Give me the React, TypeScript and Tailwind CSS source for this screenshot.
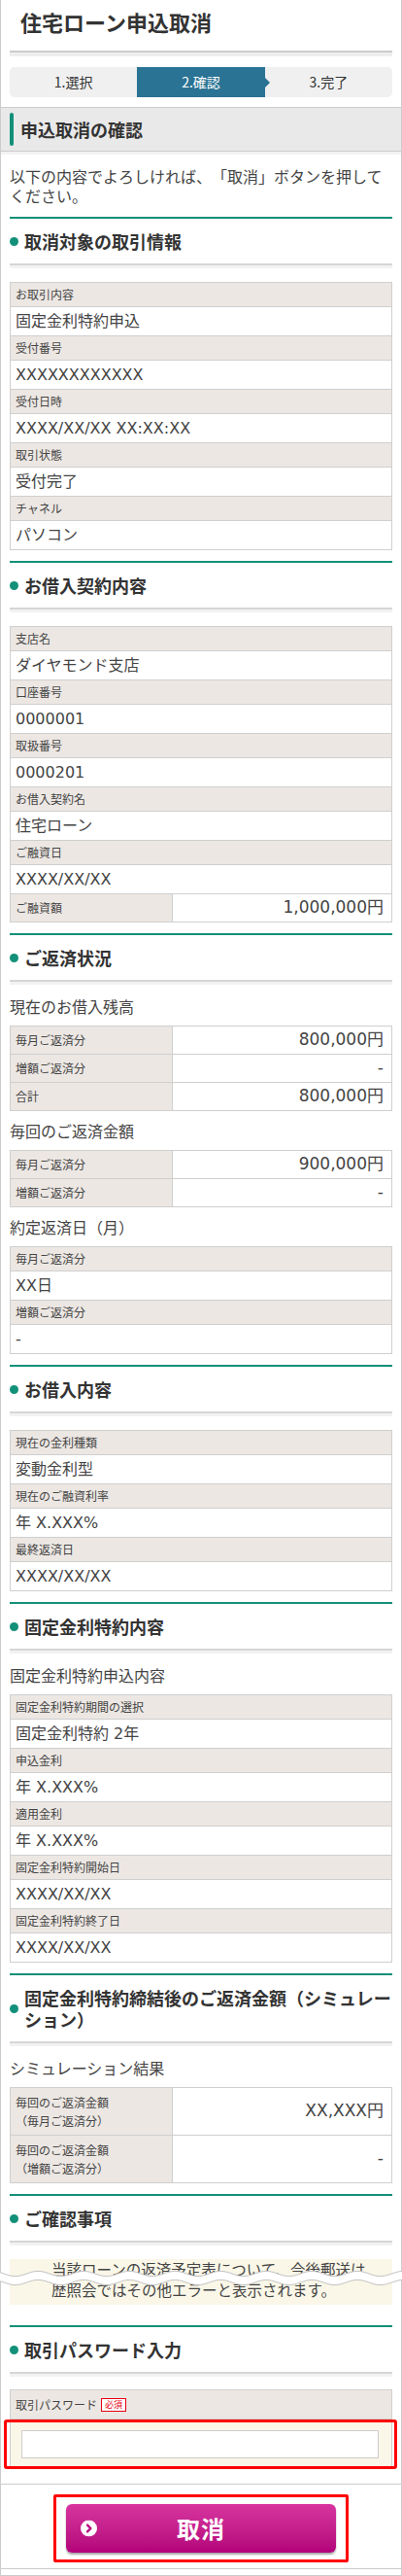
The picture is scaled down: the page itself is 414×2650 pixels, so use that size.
import React from 'react'

// 住宅ローン申込取消 — 確認画面（スマホ幅）

type Row =
  | { kind: 'stack'; label: string; value: string }
  | { kind: 'inline'; label: string; value: string }
  | { kind: 'tall'; label: [string, string]; value: string }

const txInfo: Row[] = [
  { kind: 'stack', label: 'お取引内容', value: '固定金利特約申込' },
  { kind: 'stack', label: '受付番号', value: 'XXXXXXXXXXXX' },
  { kind: 'stack', label: '受付日時', value: 'XXXX/XX/XX XX:XX:XX' },
  { kind: 'stack', label: '取引状態', value: '受付完了' },
  { kind: 'stack', label: 'チャネル', value: 'パソコン' },
]

const contract: Row[] = [
  { kind: 'stack', label: '支店名', value: 'ダイヤモンド支店' },
  { kind: 'stack', label: '口座番号', value: '0000001' },
  { kind: 'stack', label: '取扱番号', value: '0000201' },
  { kind: 'stack', label: 'お借入契約名', value: '住宅ローン' },
  { kind: 'stack', label: 'ご融資日', value: 'XXXX/XX/XX' },
  { kind: 'inline', label: 'ご融資額', value: '1,000,000円' },
]

const balance: Row[] = [
  { kind: 'inline', label: '毎月ご返済分', value: '800,000円' },
  { kind: 'inline', label: '増額ご返済分', value: '-' },
  { kind: 'inline', label: '合計', value: '800,000円' },
]

const perPayment: Row[] = [
  { kind: 'inline', label: '毎月ご返済分', value: '900,000円' },
  { kind: 'inline', label: '増額ご返済分', value: '-' },
]

const payDay: Row[] = [
  { kind: 'stack', label: '毎月ご返済分', value: 'XX日' },
  { kind: 'stack', label: '増額ご返済分', value: '-' },
]

const loan: Row[] = [
  { kind: 'stack', label: '現在の金利種類', value: '変動金利型' },
  { kind: 'stack', label: '現在のご融資利率', value: '年 X.XXX%' },
  { kind: 'stack', label: '最終返済日', value: 'XXXX/XX/XX' },
]

const fixedRate: Row[] = [
  { kind: 'stack', label: '固定金利特約期間の選択', value: '固定金利特約 2年' },
  { kind: 'stack', label: '申込金利', value: '年 X.XXX%' },
  { kind: 'stack', label: '適用金利', value: '年 X.XXX%' },
  { kind: 'stack', label: '固定金利特約開始日', value: 'XXXX/XX/XX' },
  { kind: 'stack', label: '固定金利特約終了日', value: 'XXXX/XX/XX' },
]

const simulation: Row[] = [
  { kind: 'tall', label: ['毎回のご返済金額', '（毎月ご返済分）'], value: 'XX,XXX円' },
  { kind: 'tall', label: ['毎回のご返済金額', '（増額ご返済分）'], value: '-' },
]

// 省略部分の波線（上下2本の平行な波）
function wavePath(offset: number) {
  const pts: string[] = []
  for (let x = -2; x <= 416; x += 2) {
    const y = offset + 2.6 * Math.sin(((x - 4) / 47) * Math.PI * 2)
    pts.push(`${x},${y.toFixed(2)}`)
  }
  return pts
}
const topWave = wavePath(5)
const bottomWave = wavePath(14)
const bandPath = `M${topWave.join(' L')} L${[...bottomWave].reverse().join(' L')} Z`

// 値セル: 英数字は幅の広い DejaVu Sans、和文は Noto Sans CJK JP
const valueFont = "font-['DejaVu_Sans','Noto_Sans_CJK_JP',sans-serif]"

function Table({ rows }: { rows: Row[] }) {
  return (
    <div className="border-x border-b border-[#cfcfcf]">
      {rows.map((r, i) => {
        if (r.kind === 'stack') {
          return (
            <React.Fragment key={i}>
              <div className="h-[25px] border-t border-[#cfcfcf] bg-[#ece7e3] px-[5px] flex items-center text-[12px] text-[#444]">
                {r.label}
              </div>
              <div className={`h-[30px] border-t border-[#cfcfcf] bg-white px-[5px] flex items-center text-[16px] text-[#444] ${valueFont}`}>
                {r.value}
              </div>
            </React.Fragment>
          )
        }
        if (r.kind === 'inline') {
          return (
            <div key={i} className="h-[29px] border-t border-[#cfcfcf] flex">
              <div className="w-[167px] shrink-0 bg-[#ece7e3] border-r border-[#cfcfcf] px-[5px] flex items-center text-[12px] text-[#444]">
                {r.label}
              </div>
              <div className={`flex-1 flex items-center justify-end pr-[8px] text-[17px] text-[#444] ${valueFont}`}>
                {r.value}
              </div>
            </div>
          )
        }
        return (
          <div key={i} className="h-[49px] border-t border-[#cfcfcf] flex">
            <div className="w-[167px] shrink-0 bg-[#ece7e3] border-r border-[#cfcfcf] px-[5px] flex flex-col justify-center text-[12px] leading-[19px] text-[#444]">
              <span>{r.label[0]}</span>
              <span>{r.label[1]}</span>
            </div>
            <div className={`flex-1 flex items-center justify-end pr-[8px] text-[17px] text-[#444] ${valueFont}`}>
              {r.value}
            </div>
          </div>
        )
      })}
    </div>
  )
}

function Section({ title, children }: { title: React.ReactNode; children: React.ReactNode }) {
  return (
    <section className="border-t-2 border-[#13907a]">
      <h2 className="flex items-center gap-[6px] py-[12px]">
        <span className="w-[9px] h-[9px] rounded-full bg-[#13907a] shrink-0" />
        <span className="text-[18px] leading-[22px] font-bold text-[#333]">{title}</span>
      </h2>
      <div className="h-[5px] border-t-2 border-[#d6d6d6] bg-[#f2f2f2]" />
      <div className="pb-[11px]">{children}</div>
    </section>
  )
}

function SubHead({ children, first }: { children: React.ReactNode; first?: boolean }) {
  return (
    <p className={`h-[40px] flex items-center text-[16px] text-[#444] ${first ? 'mt-[2px]' : ''}`}>
      {children}
    </p>
  )
}

export default function App() {
  return (
    <div className="w-[414px] min-h-[2650px] bg-white border-x border-b border-[#cccccc] font-['Noto_Sans_CJK_JP',sans-serif] text-[#333] [text-spacing-trim:space-all]">
      {/* ── タイトル・ステップ ── */}
      <div className="px-[9px]">
        <div className="h-[52px] pt-[10px] pl-[11px]">
          <h1 className="text-[22px] leading-[24px] font-bold text-[#333]">住宅ローン申込取消</h1>
        </div>
        <div className="h-[6px] border-t-2 border-[#cccccc] bg-[#eeeeee]" />

        <ol className="mt-[11px] h-[31px] bg-[#f0f0f0] rounded-[5px] grid grid-cols-3 text-[14px]">
          <li className="flex items-center justify-center text-[#333]">1.選択</li>
          <li className="relative flex items-center justify-center bg-[#2a7394] text-white">
            2.確認
            <span className="absolute right-[-5px] top-1/2 -translate-y-1/2 w-0 h-0 border-y-[5px] border-y-transparent border-l-[5px] border-l-[#2a7394]" />
          </li>
          <li className="flex items-center justify-center text-[#333]">3.完了</li>
        </ol>
      </div>

      {/* ── 申込取消の確認 ── */}
      <div className="mt-[10px] border-y border-[#cccccc] bg-[#e9e9e9] h-[46px] px-[9px] flex items-center">
        <span className="w-[4px] h-[34px] rounded-full bg-[#13907a]" />
        <h2 className="ml-[7px] text-[18px] font-bold text-[#333]">申込取消の確認</h2>
      </div>
      <div className="h-[3px] bg-[#f3f3f3]" />

      <div className="px-[9px]">
        <p className="pt-[13px] pb-[12px] text-[16px] leading-[19.5px] text-[#444]">
          以下の内容でよろしければ、「取消」ボタンを押してください。
        </p>

        <Section title="取消対象の取引情報">
          <div className="mt-[14px]">
            <Table rows={txInfo} />
          </div>
        </Section>

        <Section title="お借入契約内容">
          <div className="mt-[14px]">
            <Table rows={contract} />
          </div>
        </Section>

        <Section title="ご返済状況">
          <SubHead first>現在のお借入残高</SubHead>
          <Table rows={balance} />
          <SubHead>毎回のご返済金額</SubHead>
          <Table rows={perPayment} />
          <SubHead>約定返済日（月）</SubHead>
          <Table rows={payDay} />
        </Section>

        <Section title="お借入内容">
          <div className="mt-[14px]">
            <Table rows={loan} />
          </div>
        </Section>

        <Section title="固定金利特約内容">
          <SubHead first>固定金利特約申込内容</SubHead>
          <Table rows={fixedRate} />
        </Section>

        <Section title="固定金利特約締結後のご返済金額（シミュレーション）">
          <SubHead first>シミュレーション結果</SubHead>
          <Table rows={simulation} />
        </Section>

        <Section title="ご確認事項">
          <div className="relative mt-[14px] mb-[10px] h-[47px] bg-[#faf7e8] pl-[43px] text-[15.5px] leading-[21px] text-[#444]">
            <p className="whitespace-nowrap">当該ローンの返済予定表について、今後郵送は</p>
            <p className="whitespace-nowrap">歴照会ではその他エラーと表示されます。</p>
            <svg
              className="absolute left-[-10px] top-[10px] w-[414px] h-[19px]"
              viewBox="0 0 414 19"
              fill="none"
            >
              <path d={bandPath} fill="#ffffff" />
              <path d={`M${topWave.join(' L')}`} stroke="#c4c4c4" strokeWidth="1" />
              <path d={`M${bottomWave.join(' L')}`} stroke="#c4c4c4" strokeWidth="1" />
            </svg>
          </div>
        </Section>

        <section className="border-t-2 border-[#13907a]">
          <h2 className="flex items-center gap-[6px] py-[12px]">
            <span className="w-[9px] h-[9px] rounded-full bg-[#13907a] shrink-0" />
            <span className="text-[18px] leading-[22px] font-bold text-[#333]">取引パスワード入力</span>
          </h2>
          <div className="h-[5px] border-t-2 border-[#d6d6d6] bg-[#f2f2f2]" />
          <div className="mt-[13px] border-x border-t border-[#cfcfcf]">
            <div className="h-[29px] bg-[#ece7e3] px-[5px] flex items-center gap-[4px] text-[12px] text-[#444]">
              取引パスワード
              <span className="h-[14px] px-[3px] border border-[#e60012] bg-white text-[#e60012] text-[9px] leading-[12px] flex items-center">
                必須
              </span>
            </div>
            <div className="relative h-[49px] border-t border-[#cfcfcf] bg-[#faf7e8] pl-[11px] pr-[13px] pt-[11px]">
              <input
                type="password"
                aria-label="取引パスワード"
                className="block w-full h-[29px] bg-white border border-[#cccccc] outline-none"
              />
              <span className="absolute left-[-7px] right-[-6px] top-0 bottom-[-3px] border-[3px] border-[#ff0000] rounded-[3px] pointer-events-none" />
            </div>
          </div>
        </section>
      </div>

      {/* ── 取消ボタン ── */}
      <div className="mt-[18px] border-y border-[#cccccc] pt-[10px] pb-[6px]">
        <div className="mx-auto w-fit border-[3px] border-[#ff0000] rounded-[2px] px-[10px] py-[7px]">
          <button
            type="button"
            className="relative w-[278px] h-[50px] rounded-[6px] bg-gradient-to-b from-[#d7349f] to-[#b3007a] shadow-[0_2px_2px_rgba(0,0,0,0.35)] flex items-center justify-center"
          >
            <svg className="absolute left-[15px] top-1/2 -translate-y-1/2 w-[17px] h-[17px]" viewBox="0 0 16 16">
              <circle cx="8" cy="8" r="8" fill="#ffffff" />
              <path d="M6.6 4.8 L9.8 8 L6.6 11.2" stroke="#b8077f" strokeWidth="2.2" fill="none" strokeLinecap="round" strokeLinejoin="round" />
            </svg>
            <span className="text-[24px] font-bold text-white tracking-[1px]">取消</span>
          </button>
        </div>
      </div>
    </div>
  )
}
